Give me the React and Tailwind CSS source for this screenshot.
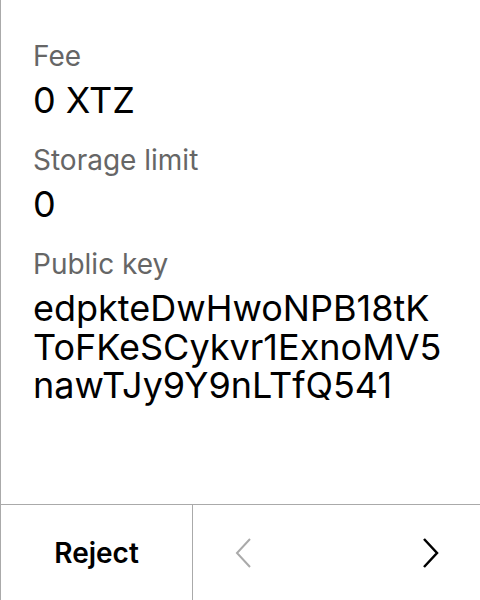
import React from 'react';

const Field = ({ label, children }) => (
  <div className="flex flex-col">
    <div className="text-[28px] leading-[36px] text-[#666666]">{label}</div>
    <div className="mt-[7px] text-[36px] leading-[38.5px] text-black">{children}</div>
  </div>
);

const ChevronLeft = ({ className }) => (
  <svg viewBox="0 0 16 30" className={className} fill="none" stroke="currentColor" strokeWidth="2">
    <path d="M15 1 L2 15 L15 29" />
  </svg>
);

const ChevronRight = ({ className }) => (
  <svg viewBox="0 0 16 30" className={className} fill="none" stroke="currentColor" strokeWidth="2.5">
    <path d="M1 1 L14 15 L1 29" />
  </svg>
);

export default function App() {
  return (
    <div className="w-[480px] h-[600px] bg-white flex flex-col border-l border-[#aaaaaa]" style={{ fontFamily: 'Inter, "Noto Sans", sans-serif' }}>
      <div className="flex-1 pl-[32px] pr-[20px] pt-[38px] flex flex-col gap-[22.5px]">
        <Field label="Fee">0 XTZ</Field>
        <Field label="Storage limit">0</Field>
        <Field label="Public key">
          <span className="block">edpkteDwHwoNPB18tK</span>
          <span className="block">ToFKeSCykvr1ExnoMV5</span>
          <span className="block">nawTJy9Y9nLTfQ541</span>
        </Field>
      </div>
      <div className="h-[96px] flex border-t border-[#aaaaaa]">
        <button className="w-[192px] flex items-center justify-center text-[28px] font-semibold text-black border-r border-[#aaaaaa]">
          Reject
        </button>
        <div className="flex-1 flex items-center justify-between pl-[42px] pr-[41px]">
          <ChevronLeft className="w-[16px] h-[30px] text-[#aaaaaa]" />
          <ChevronRight className="w-[16px] h-[30px] text-black" />
        </div>
      </div>
    </div>
  );
}
